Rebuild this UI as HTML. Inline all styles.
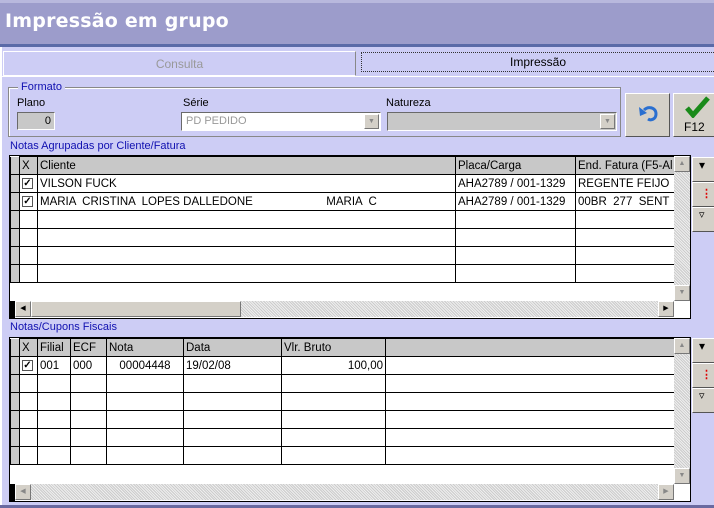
<!DOCTYPE html>
<html><head><meta charset="utf-8"><style>
*{box-sizing:border-box;margin:0;padding:0}
body{width:714px;height:508px;overflow:hidden;background:#cdcdf5;font-family:"Liberation Sans",sans-serif;font-size:11px;position:relative}
.a{position:absolute}
.lbl{font-size:11px;color:#000}
.blue{color:#1010b0}
.sunk{border-top:1px solid #6a6a6a;border-left:1px solid #6a6a6a;border-right:1px solid #fff;border-bottom:1px solid #fff}
.rais{border-top:1px solid #fff;border-left:1px solid #fff;border-right:1px solid #555;border-bottom:1px solid #555;background:#d4d0c8}
table{border-collapse:collapse;table-layout:fixed;position:absolute}
td{border:1px solid #000;height:18px;padding:0 2px;white-space:nowrap;overflow:hidden;font-size:11.5px;line-height:16px}
tr.h td{background:#c8c8c8}
td.ind{background:#c8c8c8;border-top:1px solid #fff}
.cb{display:inline-block;width:11px;height:11px;border:1px solid #555;background:#fff;font-size:10px;line-height:9px;text-align:center;vertical-align:middle;font-weight:bold}
.hatch{background:repeating-linear-gradient(45deg,#ccc 0 1px,#eee 1px 2px)}
.sb{background:#d4d0c8;border-top:1px solid #fff;border-left:1px solid #fff;border-right:1px solid #777;border-bottom:1px solid #777;font-size:7px;text-align:center;line-height:14px;color:#000}
</style></head><body>
<div class="a" style="left:0;top:0;width:714px;height:44px;background:#9c9ccb"></div>
<div class="a" style="left:0;top:0;width:714px;height:3px;background:#b8b8dd"></div>
<div class="a" style="left:5px;top:10px;color:#fff;font-weight:bold;font-size:19px;letter-spacing:0.2px;font-family:'DejaVu Sans',sans-serif">Impressão em grupo</div>
<div class="a" style="left:0;top:44px;width:714px;height:3px;background:#5a6aa8"></div>
<div class="a" style="left:0;top:47px;width:2px;height:461px;background:#fff"></div>

<div class="a" style="left:3px;top:51px;width:353px;height:25px;border:1px solid #fff;border-right-color:#888;text-align:center;line-height:24px;color:#999;font-size:12px">Consulta</div>
<div class="a" style="left:361px;top:52px;width:353px;height:20px;border:1px dotted #333;border-right:none;text-align:center;line-height:18px;font-size:12px">Impressão</div>
<div class="a" style="left:2px;top:76px;width:712px;height:1px;background:#fff"></div>

<div class="a" style="left:8px;top:87px;width:613px;height:50px;border:1px solid #888;box-shadow:1px 1px 0 #fff inset"></div>
<div class="a blue" style="left:18px;top:81px;background:#cdcdf5;padding:0 3px;font-size:11px">Formato</div>
<div class="a lbl" style="left:17px;top:97px">Plano</div>
<div class="a sunk" style="left:17px;top:112px;width:38px;height:18px;background:#c8c8c8;text-align:right;padding-right:3px;line-height:16px">0</div>
<div class="a lbl" style="left:183px;top:97px">Série</div>
<div class="a sunk" style="left:181px;top:112px;width:200px;height:19px;background:#fff;color:#999;padding-left:4px;line-height:17px">PD PEDIDO</div>
<div class="a sb" style="left:364px;top:114px;width:15px;height:15px;line-height:13px;color:#888">▼</div>
<div class="a lbl" style="left:386px;top:97px">Natureza</div>
<div class="a sunk" style="left:387px;top:112px;width:230px;height:19px;background:#c8c8c8"></div>
<div class="a sb" style="left:600px;top:114px;width:15px;height:15px;line-height:13px;color:#888">▼</div>

<div class="a rais" style="left:625px;top:93px;width:45px;height:44px;text-align:center">
<svg width="24" height="20" viewBox="0 0 24 20" style="margin-top:10px"><path d="M8 6 C12 2 20 3 20 10 C20 15 15 17 12 15" fill="none" stroke="#2a6fd0" stroke-width="3"/><path d="M3 3 L4 12 L11 9 Z" fill="#2a6fd0"/></svg></div>
<div class="a rais" style="left:673px;top:93px;width:45px;height:44px">
<svg width="26" height="22" style="position:absolute;left:10px;top:2px"><path d="M3 12 L9 19 L24 2" fill="none" stroke="#1a8a1a" stroke-width="5"/></svg>
<div class="a" style="left:10px;top:26px;font-size:12px">F12</div></div>

<div class="a blue" style="left:10px;top:140px;font-size:11px">Notas Agrupadas por Cliente/Fatura</div>
<div class="a" style="left:9px;top:155px;width:682px;height:164px;background:#fff;border:1px solid #000"></div>
<table style="left:10px;top:156px;width:664px">
<colgroup><col style="width:9px"><col style="width:18px"><col style="width:418px"><col style="width:120px"><col style="width:99px"></colgroup>
<tr class="h"><td class="ind"></td><td>X</td><td>Cliente</td><td>Placa/Carga</td><td>End. Fatura (F5-Al</td></tr>
<tr><td class="ind"></td><td><span class="cb">✓</span></td><td>VILSON FUCK</td><td>AHA2789 / 001-1329</td><td>REGENTE FEIJO</td></tr>
<tr><td class="ind"></td><td><span class="cb">✓</span></td><td>MARIA &nbsp;CRISTINA &nbsp;LOPES DALLEDONE &nbsp; &nbsp; &nbsp; &nbsp; &nbsp; &nbsp; &nbsp; &nbsp; &nbsp; &nbsp; &nbsp; MARIA &nbsp;C</td><td>AHA2789 / 001-1329</td><td>00BR &nbsp;277 &nbsp;SENT</td></tr>
<tr><td class="ind"></td><td></td><td></td><td></td><td></td></tr>
<tr><td class="ind"></td><td></td><td></td><td></td><td></td></tr>
<tr><td class="ind"></td><td></td><td></td><td></td><td></td></tr>
<tr><td class="ind"></td><td></td><td></td><td></td><td></td></tr>
</table>
<div class="a hatch" style="left:674px;top:156px;width:16px;height:145px"></div>
<div class="a sb" style="left:674px;top:156px;width:16px;height:16px;color:#888">▲</div>
<div class="a sb" style="left:674px;top:285px;width:16px;height:16px;color:#888">▼</div>
<div class="a hatch" style="left:10px;top:301px;width:664px;height:16px"></div>
<div class="a" style="left:10px;top:301px;width:5px;height:17px;background:#000"></div>
<div class="a sb" style="left:15px;top:301px;width:16px;height:16px">◀</div>
<div class="a sb" style="left:31px;top:301px;width:210px;height:16px"></div>
<div class="a sb" style="left:658px;top:301px;width:16px;height:16px">▶</div>

<div class="a rais" style="left:692px;top:157px;width:24px;height:25px;font-size:12px;padding-left:6px">▾</div>
<div class="a rais" style="left:692px;top:182px;width:24px;height:25px;color:#d00;font-weight:bold;padding-left:8px;line-height:22px">⋮</div>
<div class="a rais" style="left:692px;top:207px;width:24px;height:25px;padding-left:6px">▿</div>

<div class="a blue" style="left:10px;top:321px;font-size:11px">Notas/Cupons Fiscais</div>
<div class="a" style="left:9px;top:337px;width:682px;height:165px;background:#fff;border:1px solid #000"></div>
<table style="left:10px;top:338px;width:664px">
<colgroup><col style="width:9px"><col style="width:18px"><col style="width:33px"><col style="width:36px"><col style="width:77px"><col style="width:98px"><col style="width:104px"><col style="width:289px"></colgroup>
<tr class="h"><td class="ind"></td><td>X</td><td>Filial</td><td>ECF</td><td>Nota</td><td>Data</td><td>Vlr. Bruto</td><td style="border-right:none"></td></tr>
<tr><td class="ind"></td><td><span class="cb">✓</span></td><td>001</td><td>000</td><td style="text-align:center">00004448</td><td>19/02/08</td><td style="text-align:right">100,00</td><td style="border-right:none"></td></tr>
<tr><td class="ind"></td><td></td><td></td><td></td><td></td><td></td><td></td><td style="border-right:none"></td></tr>
<tr><td class="ind"></td><td></td><td></td><td></td><td></td><td></td><td></td><td style="border-right:none"></td></tr>
<tr><td class="ind"></td><td></td><td></td><td></td><td></td><td></td><td></td><td style="border-right:none"></td></tr>
<tr><td class="ind"></td><td></td><td></td><td></td><td></td><td></td><td></td><td style="border-right:none"></td></tr>
<tr><td class="ind"></td><td></td><td></td><td></td><td></td><td></td><td></td><td style="border-right:none"></td></tr>
</table>
<div class="a hatch" style="left:674px;top:338px;width:16px;height:146px"></div>
<div class="a sb" style="left:674px;top:338px;width:16px;height:16px;color:#888">▲</div>
<div class="a sb" style="left:674px;top:468px;width:16px;height:16px;color:#888">▼</div>
<div class="a hatch" style="left:10px;top:484px;width:664px;height:16px"></div>
<div class="a" style="left:10px;top:484px;width:5px;height:17px;background:#000"></div>
<div class="a sb" style="left:15px;top:484px;width:16px;height:16px;color:#888">◀</div>
<div class="a sb" style="left:658px;top:484px;width:16px;height:16px;color:#888">▶</div>

<div class="a rais" style="left:692px;top:338px;width:24px;height:25px;font-size:12px;padding-left:6px">▾</div>
<div class="a rais" style="left:692px;top:363px;width:24px;height:25px;color:#d00;font-weight:bold;padding-left:8px;line-height:22px">⋮</div>
<div class="a rais" style="left:692px;top:388px;width:24px;height:25px;padding-left:6px">▿</div>
<div class="a" style="left:0;top:505px;width:714px;height:3px;background:#6a6aa0"></div>
</body></html>
